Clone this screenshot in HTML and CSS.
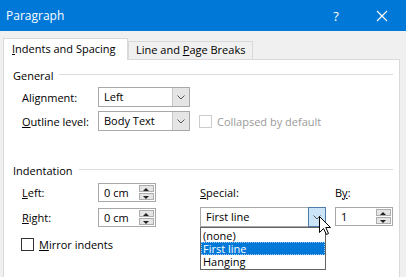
FILE: index.html
```html
<!DOCTYPE html>
<html>
<head>
<meta charset="utf-8">
<link rel="stylesheet" href="styles.css">
</head>
<body>
<div class="window">
  <div class="titlebar">
    <span class="title">Paragraph</span>
    <span class="help">?</span>
    <span class="close"><svg width="12" height="12" viewBox="0 0 12 12"><path d="M1 1L11 11M11 1L1 11" stroke="#fff" stroke-width="1.2"/></svg></span>
  </div>
  <div class="body">
    <div class="tabs">
      <div class="tab active"><u>I</u>ndents and Spacing</div>
      <div class="tab">Line and <u>P</u>age Breaks</div>
    </div>
    <div class="panel">
      <div class="group-head"><span>General</span><i class="rule"></i></div>
      <div class="general">
        <div class="row">
          <span class="label">Ali<u>g</u>nment:</span>
          <div class="combo w92"><span class="val">Left</span><span class="arrow"><svg width="8" height="5" viewBox="0 0 8 5"><path d="M0.5 0.5L4 4L7.5 0.5" fill="none" stroke="#555" stroke-width="1"/></svg></span></div>
        </div>
        <div class="row">
          <span class="label"><u>O</u>utline level:</span>
          <div class="combo w92"><span class="val">Body Text</span><span class="arrow"><svg width="8" height="5" viewBox="0 0 8 5"><path d="M0.5 0.5L4 4L7.5 0.5" fill="none" stroke="#555" stroke-width="1"/></svg></span></div>
          <span class="check disabled"></span>
          <span class="disabled-text">Collapsed by default</span>
        </div>
      </div>
      <div class="group-head second"><span>Indentation</span><i class="rule"></i></div>
      <div class="indent">
        <span class="label"><u>L</u>eft:</span>
        <div class="spin"><span class="val">0 cm</span><span class="btns"><b class="up"></b><b class="down"></b></span></div>
        <span class="slabel"><u>S</u>pecial:</span>
        <span class="slabel">B<u>y</u>:</span>

        <span class="label"><u>R</u>ight:</span>
        <div class="spin"><span class="val">0 cm</span><span class="btns"><b class="up"></b><b class="down"></b></span></div>
        <div class="combo special">
          <span class="val">First line</span>
          <span class="arrow hot"><svg width="8" height="5" viewBox="0 0 8 5"><path d="M0.5 0.5L4 4L7.5 0.5" fill="none" stroke="#555" stroke-width="1"/></svg></span>
          <ul class="list">
            <li>(none)</li>
            <li class="sel">First line</li>
            <li>Hanging</li>
          </ul>
        </div>
        <div class="spin"><span class="val">1</span><span class="btns"><b class="up"></b><b class="down"></b></span></div>
      </div>
      <div class="mirror"><span class="check"></span><span><u>M</u>irror indents</span></div>
    </div>
  </div>
  <svg class="cursor" width="13" height="20" viewBox="0 0 13 20"><path d="M0.5 0.5L0.5 16.5L4.5 12.5L7.5 18.5L9.5 17.5L6.8 11.5L11.5 11.5Z" fill="#fff" stroke="#000" stroke-width="1" stroke-linejoin="miter"/></svg>
</div>
</body>
</html>
```
FILE: styles.css
```css
* { box-sizing: border-box; }
html, body { margin: 0; padding: 0; }
body {
  width: 406px;
  height: 277px;
  overflow: hidden;
  background: #f0f0f0;
  font-family: "Open Sans", "Noto Sans", sans-serif;
  font-size: 11px;
  color: #000;
}
u { text-decoration: underline; text-underline-offset: 1px; }
.window { position: relative; width: 406px; height: 277px; }
.titlebar {
  height: 31px;
  background: #0078d7;
  color: #fff;
  display: flex;
  align-items: center;
  padding-left: 6px;
}
.title { font-size: 12px; flex: 1; }
.help { font-size: 13px; width: 46px; text-align: center; }
.close { width: 46px; display: flex; justify-content: center; margin-right: 1px; }
.close svg { display: block; }
.body { padding: 7px 6px 0 3px; }
.tabs { display: flex; align-items: flex-end; height: 21px; }
.tab {
  border: 1px solid #d9d9d9;
  border-bottom: none;
  background: #f0f0f0;
  height: 18px;
  padding: 0 7px 0 7px;
  line-height: 16px;
  white-space: nowrap;
}
.tab.active {
  background: #fff;
  height: 22px;
  width: 125px;
  line-height: 20px;
  padding-left: 8px;
  margin-bottom: -1px;
  position: relative;
  z-index: 1;
}
.panel {
  background: #fff;
  border: 1px solid #d9d9d9;
  border-bottom: none;
  height: 230px;
  padding: 7px 6px 0 9px;
  position: relative;
}
.group-head { display: flex; align-items: center; height: 16px; }
.group-head .rule { flex: 1; height: 1px; background: #dcdcdc; margin-left: 6px; margin-top: -1px; }
.group-head.second { margin-top: 31px; }
.general { padding-left: 9px; padding-top: 4px; display: flex; flex-direction: column; gap: 4px; }
.row { display: flex; align-items: center; height: 20px; }
.label { width: 76px; }
.combo {
  height: 20px;
  border: 1px solid #a8a8a8;
  display: flex;
  align-items: stretch;
  background: #fff;
  position: relative;
}
.combo .val { flex: 1; padding-left: 5px; line-height: 18px; }
.combo .arrow {
  width: 17px;
  background: #e5e5e5;
  border-left: 1px solid #c6c6c6;
  display: flex;
  align-items: center;
  justify-content: center;
}
.combo .arrow.hot {
  background: #cce4f7;
  border: 1px solid #4f7ba8;
  margin: -1px -1px -1px 0;
  width: 18px;
}
.w92 { width: 92px; }
.check {
  width: 13px;
  height: 13px;
  border: 1px solid #333;
  background: #fff;
  display: inline-block;
}
.check.disabled { border-color: #cccccc; margin-left: 9px; }
.disabled-text { color: #9a9a9a; margin-left: 5px; }
.indent {
  display: grid;
  grid-template-columns: 76px 58px 170px 67px;
  padding-left: 9px;
  padding-top: 5px;
  grid-template-rows: 19px 20px;
  row-gap: 5px;
}
.indent > :nth-child(3), .indent > :nth-child(7) { margin-left: 44px; width: 126px; }
.indent > :nth-child(4), .indent > :nth-child(8) { margin-left: 9px; width: 58px; }
.indent .label, .indent .slabel { align-self: center; }
.spin {
  height: 19px;
  border: 1px solid #a8a8a8;
  display: flex;
  background: #fff;
}
.indent > .spin:nth-child(6) { margin-top: 1px; }
.spin .val { flex: 1; padding-left: 5px; line-height: 17px; }
.spin .btns { width: 16px; display: flex; flex-direction: column; padding: 1px 1px 1px 0; gap: 1px; }
.spin .btns b {
  flex: 1;
  background: #e5e5e5;
  border: 1px solid #adadad;
  position: relative;
}
.spin .btns b::after {
  content: "";
  position: absolute;
  left: 3px;
  top: 2px;
  border-left: 3.5px solid transparent;
  border-right: 3.5px solid transparent;
}
.spin .btns b.up::after { border-bottom: 3px solid #222; }
.spin .btns b.down::after { border-top: 3px solid #222; top: 2px; }
.special { height: 20px; }
.list {
  position: absolute;
  left: -1px;
  top: 19px;
  width: 126px;
  margin: 0;
  padding: 1px 0;
  list-style: none;
  background: #fff;
  border: 1px solid #646464;
  z-index: 2;
}
.list li { height: 13px; line-height: 13px; padding-left: 2px; }
.list li.sel {
  background: #0078d7;
  color: #fff;
  outline: 1px dotted #9ac6ff;
  outline-offset: -1px;
}
.mirror { display: flex; align-items: center; padding-left: 8px; margin-top: 10px; gap: 5px; }
.cursor { position: absolute; left: 319px; top: 216px; z-index: 5; }
```
